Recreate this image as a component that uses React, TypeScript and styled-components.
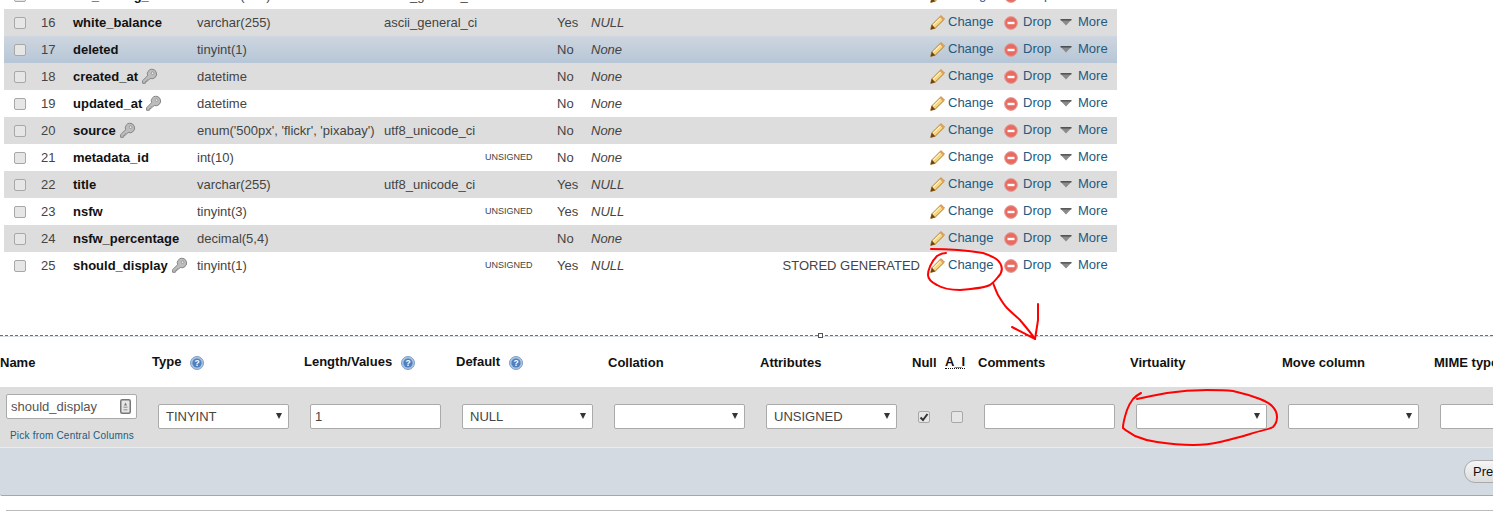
import styled, { createGlobalStyle, css } from "styled-components";

const GlobalStyle = createGlobalStyle`
  html, body {
    margin: 0;
    padding: 0;
    background: #fff;
    overflow: hidden;
  }
  body {
    font-family: "Liberation Sans", Arial, sans-serif;
    font-size: 13px;
    color: #444;
  }
`;

const Page = styled.div`
  position: relative;
  width: 1493px;
  height: 518px;
  overflow: hidden;
`;

const Table = styled.div`
  margin: -18px 0 0 4px;
  width: 1113px;
`;

const Row = styled.div<{ $tone: "white" | "gray" | "hover" }>`
  display: grid;
  grid-template-columns: 37px 32px 124px 187px 101px 72px 34px 109px 220px 10px 74px 56px 57px;
  align-items: center;
  height: 27px;
  ${(p) =>
    p.$tone === "gray" &&
    css`
      background: #ddd;
    `}
  ${(p) =>
    p.$tone === "hover" &&
    css`
      background: linear-gradient(#ced6df, #b6c6d7);
    `}
`;

const CheckCell = styled.div`
  display: flex;
  padding-left: 10px;
`;

const Check = styled.span`
  display: flex;
  align-items: center;
  justify-content: center;
  box-sizing: border-box;
  width: 12px;
  height: 12px;
  background: #e6e6e6;
  border: 1px solid #a8a8a8;
  border-radius: 2px;
`;

const Num = styled.div``;

const NameCell = styled.div`
  display: flex;
  align-items: center;
  gap: 3px;
  font-weight: 700;
  color: #111;
  white-space: nowrap;
`;

const Cell = styled.div`
  white-space: nowrap;
`;

const Small = styled.div`
  margin-top: -2px;
  font-size: 9px;
  white-space: nowrap;
`;

const Muted = styled.div`
  font-style: italic;
`;

const Extra = styled.div`
  text-align: right;
  white-space: nowrap;
`;

const Action = styled.a<{ $gap: number }>`
  display: flex;
  align-items: center;
  gap: ${(p) => p.$gap}px;
  color: #235a81;
  white-space: nowrap;
  span {
    margin-top: -2px;
  }
`;

const Divider = styled.div`
  position: relative;
  height: 2px;
  margin-top: 56px;
  border-top: 1px dashed #2b7fd0;
  box-sizing: border-box;
  background: #d8dde2;
  background-clip: padding-box;
`;

const Handle = styled.span`
  position: absolute;
  left: 818px;
  top: -3px;
  box-sizing: border-box;
  width: 5px;
  height: 5px;
  background: #fff;
  border: 1px solid #555;
`;

const formColumns = "152px 152px 152px 152px 152px 152px 33px 33px 152px 152px 152px 152px";

const FormHead = styled.div`
  display: grid;
  grid-template-columns: ${formColumns};
  align-items: center;
  height: 50px;
  font-weight: 700;
  color: #111;
`;

const HeadCell = styled.div`
  display: flex;
  align-items: center;
  gap: 9px;
  white-space: nowrap;
`;

const HelpLabel = styled.span`
  margin-bottom: 2px;
`;

const HelpMark = styled.span`
  display: flex;
  margin-top: 2px;
`;

const Abbr = styled.span`
  border-bottom: 1px dotted #111;
  line-height: 13px;
`;

const FormRow = styled.div`
  display: grid;
  grid-template-columns: ${formColumns};
  height: 60px;
  background: #ddd;
`;

const NameColumn = styled.div`
  padding: 7px 15px 0 6px;
`;

const FieldColumn = styled.div`
  padding: 17px 0 0 6px;
`;

const CheckColumn = styled.div`
  display: flex;
  padding: 24px 0 0 6px;
`;

const fieldBox = css`
  box-sizing: border-box;
  width: 131px;
  height: 25px;
  background: #fff;
  border: 1px solid #aaa;
  border-radius: 2px;
`;

const NameInput = styled.div`
  ${fieldBox}
  display: flex;
  align-items: center;
  justify-content: space-between;
  padding: 0 5px 0 4px;
  font-size: 13px;
  color: #555;
`;

const PickLink = styled.a`
  display: block;
  margin: 11px 0 0 4px;
  font-size: 10px;
  letter-spacing: 0.2px;
  color: #235a81;
  white-space: nowrap;
`;

const TextInput = styled.input`
  ${fieldBox}
  display: block;
  padding: 0 7px 0 4px;
  font: 13px "Liberation Sans", Arial, sans-serif;
  color: #444;
  outline: none;
`;

const SelectBox = styled.div`
  ${fieldBox}
  display: flex;
  align-items: center;
  justify-content: space-between;
  padding: 0 6px 0 7px;
  color: #444;
`;

const Caret = styled.span`
  width: 0;
  height: 0;
  border-left: 3px solid transparent;
  border-right: 3px solid transparent;
  border-top: 6px solid #333;
  margin-top: -1px;
`;

const ButtonBar = styled.div`
  box-sizing: border-box;
  height: 49px;
  padding: 12px 0 0 1464px;
  background: #d3dae2;
  border-top: 1px solid #e9edf1;
  border-bottom: 1px solid #a4a8ac;
  border-bottom-left-radius: 2px;
`;

const Button = styled.button`
  box-sizing: border-box;
  height: 23px;
  padding: 0 8px;
  font: 13px "Liberation Sans", Arial, sans-serif;
  color: #111;
  white-space: nowrap;
  background: linear-gradient(#f6f6f6, #dcdcdc);
  border: 1px solid #aaa;
  border-radius: 11px;
`;

const Rule = styled.div`
  height: 1px;
  margin: 14px 0 0 6px;
  background: #bbb;
`;

const Scribble = styled.svg`
  position: absolute;
  left: 0;
  top: 0;
  pointer-events: none;
`;

function Pencil() {
  return (
    <svg width="15" height="15" viewBox="0 0 15 15">
      <path d="M11 0.7 14.4 4.1 5.2 13.2 0.7 14.4 1.9 9.8Z" fill="#f6d67a" stroke="#a9762c" strokeWidth="1" strokeLinejoin="round" />
      <path d="M3.2 10 11.2 2.2" stroke="#fdf0c0" strokeWidth="1.3" />
      <path d="M0.7 14.4 1.9 9.8 5.2 13.2Z" fill="#6b4310" />
      <path d="M11 0.7 14.4 4.1 13 5.5 9.6 2.1Z" fill="#e4a05a" />
    </svg>
  );
}

function DropIcon() {
  return (
    <svg width="14" height="14" viewBox="0 0 14 14">
      <circle cx="7" cy="7" r="6.4" fill="#e96a60" stroke="#e2a09a" strokeWidth="1" />
      <rect x="3.5" y="5.8" width="7" height="2.4" fill="#fff" />
    </svg>
  );
}

function MoreIcon() {
  return (
    <svg width="12" height="7" viewBox="0 0 12 7">
      <path d="M0.5 0.8H11.5L6 6.5Z" fill="#8a8a8a" />
      <path d="M0.5 0.8H11.5" stroke="#222" strokeWidth="1" />
    </svg>
  );
}

function KeyIcon() {
  return (
    <svg width="17" height="17" viewBox="0 0 17 17">
      <path
        d="M10.8 1.2a4.8 4.8 0 0 1 3.4 8.2 4.8 4.8 0 0 1-5 1.1L7.6 12H6v1.7H4.3v1.6H1.6v-2.6L6.6 7.7a4.8 4.8 0 0 1 4.2-6.5Z"
        fill="#bdbdbd"
        stroke="#858585"
        strokeWidth="1"
      />
      <circle cx="11.6" cy="5.2" r="1.3" fill="#eee" stroke="#858585" strokeWidth="0.7" />
    </svg>
  );
}

function HelpIcon() {
  return (
    <HelpMark>
      <svg width="14" height="14" viewBox="0 0 14 14">
        <circle cx="7" cy="7" r="6.5" fill="#a9c3e3" stroke="#7f9fc8" strokeWidth="1" />
        <circle cx="7" cy="7" r="4.6" fill="#4f7fbe" />
        <text x="7" y="10" textAnchor="middle" fontSize="8.5" fontWeight="700" fontFamily="Liberation Sans" fill="#fff">
          ?
        </text>
      </svg>
    </HelpMark>
  );
}

function NameFieldIcon() {
  return (
    <svg width="11" height="15" viewBox="0 0 11 15">
      <rect x="0.75" y="0.75" width="9.5" height="13.5" rx="1.5" fill="#e6e6e6" stroke="#777" strokeWidth="1.5" />
      <path d="M5.5 3.5 7 6.5H4Z" fill="#777" />
      <rect x="3.5" y="7.5" width="4" height="1.5" fill="#aaa" />
      <rect x="3.5" y="10" width="4" height="1.5" fill="#aaa" />
    </svg>
  );
}

type Column = {
  no: number;
  name: string;
  keyed?: boolean;
  type: string;
  collation?: string;
  unsigned?: boolean;
  isNull: "Yes" | "No";
  extra?: string;
  tone: "white" | "gray" | "hover";
};

const columns: Column[] = [
  { no: 15, name: "iso_setting_id", type: "varchar(255)", collation: "ascii_general_ci", isNull: "Yes", tone: "white" },
  { no: 16, name: "white_balance", type: "varchar(255)", collation: "ascii_general_ci", isNull: "Yes", tone: "gray" },
  { no: 17, name: "deleted", type: "tinyint(1)", isNull: "No", tone: "hover" },
  { no: 18, name: "created_at", keyed: true, type: "datetime", isNull: "No", tone: "gray" },
  { no: 19, name: "updated_at", keyed: true, type: "datetime", isNull: "No", tone: "white" },
  { no: 20, name: "source", keyed: true, type: "enum('500px', 'flickr', 'pixabay')", collation: "utf8_unicode_ci", isNull: "No", tone: "gray" },
  { no: 21, name: "metadata_id", type: "int(10)", unsigned: true, isNull: "No", tone: "white" },
  { no: 22, name: "title", type: "varchar(255)", collation: "utf8_unicode_ci", isNull: "Yes", tone: "gray" },
  { no: 23, name: "nsfw", type: "tinyint(3)", unsigned: true, isNull: "Yes", tone: "white" },
  { no: 24, name: "nsfw_percentage", type: "decimal(5,4)", isNull: "No", tone: "gray" },
  { no: 25, name: "should_display", keyed: true, type: "tinyint(1)", unsigned: true, isNull: "Yes", extra: "STORED GENERATED", tone: "white" },
];

const emptySelect = <SelectBox><span /><Caret /></SelectBox>;

export default function App() {
  return (
    <Page>
      <GlobalStyle />
      <Table>
        {columns.map((col) => (
          <Row key={col.no} $tone={col.tone}>
            <CheckCell><Check /></CheckCell>
            <Num>{col.no}</Num>
            <NameCell>
              {col.name}
              {col.keyed && <KeyIcon />}
            </NameCell>
            <Cell>{col.type}</Cell>
            <Cell>{col.collation}</Cell>
            <Small>{col.unsigned ? "UNSIGNED" : ""}</Small>
            <Cell>{col.isNull}</Cell>
            <Muted>{col.isNull === "Yes" ? "NULL" : "None"}</Muted>
            <Extra>{col.extra}</Extra>
            <div />
            <Action $gap={3}><Pencil /><span>Change</span></Action>
            <Action $gap={5}><DropIcon /><span>Drop</span></Action>
            <Action $gap={6}><MoreIcon /><span>More</span></Action>
          </Row>
        ))}
      </Table>

      <Divider><Handle /></Divider>

      <FormHead>
        <HeadCell>Name</HeadCell>
        <HeadCell><HelpLabel>Type</HelpLabel> <HelpIcon /></HeadCell>
        <HeadCell><HelpLabel>Length/Values</HelpLabel> <HelpIcon /></HeadCell>
        <HeadCell><HelpLabel>Default</HelpLabel> <HelpIcon /></HeadCell>
        <HeadCell>Collation</HeadCell>
        <HeadCell>Attributes</HeadCell>
        <HeadCell>Null</HeadCell>
        <HeadCell><Abbr>A_I</Abbr></HeadCell>
        <HeadCell>Comments</HeadCell>
        <HeadCell>Virtuality</HeadCell>
        <HeadCell>Move column</HeadCell>
        <HeadCell>MIME type</HeadCell>
      </FormHead>

      <FormRow>
        <NameColumn>
          <NameInput>
            should_display
            <NameFieldIcon />
          </NameInput>
          <PickLink>Pick from Central Columns</PickLink>
        </NameColumn>
        <FieldColumn><SelectBox>TINYINT<Caret /></SelectBox></FieldColumn>
        <FieldColumn><TextInput defaultValue="1" readOnly /></FieldColumn>
        <FieldColumn><SelectBox>NULL<Caret /></SelectBox></FieldColumn>
        <FieldColumn>{emptySelect}</FieldColumn>
        <FieldColumn><SelectBox>UNSIGNED<Caret /></SelectBox></FieldColumn>
        <CheckColumn>
          <Check>
            <svg width="10" height="10" viewBox="0 0 10 10">
              <path d="M1.5 5.5 4 8 8.5 2" fill="none" stroke="#333" strokeWidth="2" />
            </svg>
          </Check>
        </CheckColumn>
        <CheckColumn><Check /></CheckColumn>
        <FieldColumn><TextInput readOnly /></FieldColumn>
        <FieldColumn>{emptySelect}</FieldColumn>
        <FieldColumn>{emptySelect}</FieldColumn>
        <FieldColumn><TextInput readOnly /></FieldColumn>
      </FormRow>

      <ButtonBar><Button>Preview SQL</Button></ButtonBar>
      <Rule />

      <Scribble width="1493" height="518" viewBox="0 0 1493 518" fill="none" stroke="#f00" strokeWidth="2" strokeLinejoin="round" strokeLinecap="round">
        <path d="M931 249C945 249 965 250 983 253C992 256 998 259 1000 263C1003 268 1002 273 998 277C995 281 993 283 990 285C984 288 973 289 960 290C950 290 942 288 937 285C931 282 928 279 928 275C928 270 931 262 937 256C940 254 943 253 946 253" />
        <path d="M993 283C995 288 996 291 998 295C1001 300 1004 305 1007 308C1012 313 1016 316 1020 320C1025 326 1031 333 1035 339" />
        <path d="M1038 304C1038 311 1038 315 1038 320C1037 327 1036 333 1035 339C1028 335 1020 331 1012 327" />
        <path d="M1141 393C1137 395 1135 397 1133 399C1130 403 1128 407 1127 410C1125 416 1123 423 1123 428C1126 431 1131 433 1135 436C1142 439 1150 441 1157 442C1170 444 1182 445 1193 445C1203 445 1212 444 1220 442C1231 439 1241 437 1250 434C1258 431 1268 430 1273 427C1276 424 1277 420 1277 417C1277 413 1275 409 1272 406C1269 403 1265 401 1260 399C1252 396 1242 393 1233 391C1224 390 1215 390 1207 390C1194 390 1180 391 1167 393C1156 395 1146 397 1137 399" />
      </Scribble>
    </Page>
  );
}
